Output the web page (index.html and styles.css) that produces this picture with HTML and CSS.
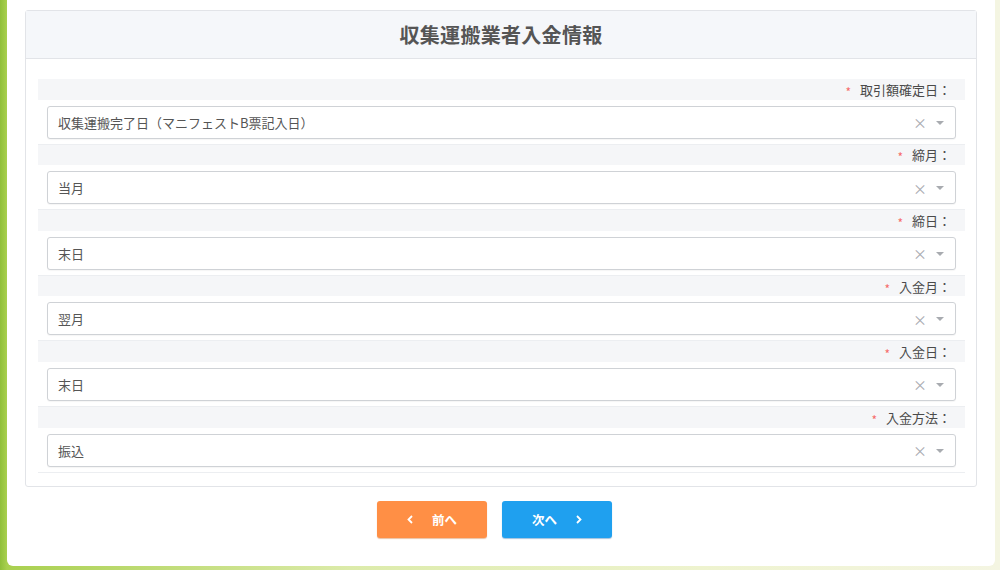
FILE: index.html
```html
<!DOCTYPE html>
<html lang="ja">
<head>
<meta charset="utf-8">
<title>収集運搬業者入金情報</title>
<link rel="stylesheet" href="styles.css">
</head>
<body>
<div class="modal">
  <div class="card">
    <div class="card-header">収集運搬業者入金情報</div>
    <div class="card-body">
      <div class="row">
        <div class="label"><span class="req">*</span>取引額確定日：</div>
        <div class="field"><div class="select"><span class="value">収集運搬完了日（マニフェストB票記入日）</span><span class="icons"><span class="clear">×</span><span class="caret"></span></span></div></div>
      </div>
      <div class="row">
        <div class="label"><span class="req">*</span>締月：</div>
        <div class="field"><div class="select"><span class="value">当月</span><span class="icons"><span class="clear">×</span><span class="caret"></span></span></div></div>
      </div>
      <div class="row">
        <div class="label"><span class="req">*</span>締日：</div>
        <div class="field"><div class="select"><span class="value">末日</span><span class="icons"><span class="clear">×</span><span class="caret"></span></span></div></div>
      </div>
      <div class="row">
        <div class="label"><span class="req">*</span>入金月：</div>
        <div class="field"><div class="select"><span class="value">翌月</span><span class="icons"><span class="clear">×</span><span class="caret"></span></span></div></div>
      </div>
      <div class="row">
        <div class="label"><span class="req">*</span>入金日：</div>
        <div class="field"><div class="select"><span class="value">末日</span><span class="icons"><span class="clear">×</span><span class="caret"></span></span></div></div>
      </div>
      <div class="row">
        <div class="label"><span class="req">*</span>入金方法：</div>
        <div class="field"><div class="select"><span class="value">振込</span><span class="icons"><span class="clear">×</span><span class="caret"></span></span></div></div>
      </div>
    </div>
  </div>
  <div class="actions">
    <button class="btn btn-prev"><svg class="chev" width="6" height="9" viewBox="0 0 6 9"><path d="M5 1 L1.5 4.5 L5 8" fill="none" stroke="#fff" stroke-width="1.8"/></svg><span>前へ</span></button>
    <button class="btn btn-next"><span>次へ</span><svg class="chev" width="6" height="9" viewBox="0 0 6 9"><path d="M1 1 L4.5 4.5 L1 8" fill="none" stroke="#fff" stroke-width="1.8"/></svg></button>
  </div>
</div>
</body>
</html>
```
FILE: styles.css
```css
html, body {
  margin: 0;
  padding: 0;
  height: 570px;
  overflow: hidden;
}
body {
  background: linear-gradient(90deg, #8fbf3a 0px, #a9d04f 7px, #dcebaa 35%, #eef3cf 70%, #f4f5e2 100%);
  font-family: "Noto Sans CJK JP", "Noto Sans", sans-serif;
  color: #555;
}
.modal {
  margin-left: 7px;
  width: 988px;
  height: 566px;
  background: #fff;
  border-radius: 0 0 6px 6px;
  padding-top: 10px;
  box-sizing: border-box;
}
.card {
  margin: 0 18px;
  border: 1px solid #e2e4e8;
  border-radius: 3px;
  height: 477px;
  box-sizing: border-box;
}
.card-header {
  height: 47px;
  background: #f5f7fa;
  border-bottom: 1px solid #e2e4e8;
  display: flex;
  align-items: center;
  justify-content: center;
  font-size: 20px;
  font-weight: bold;
  color: #555;
  letter-spacing: 0.3px;
}
.card-body {
  padding: 20px 11px 0 12px;
}
.row {
  border-bottom: 1px solid #eceef1;
  background: #fafbfc;
}
.label {
  height: 20.6px;
  background: #f5f6f8;
  display: flex;
  align-items: center;
  justify-content: flex-end;
  padding-right: 14px;
  font-size: 13px;
  color: #4a4a4a;
}
.req {
  color: #f56c6c;
  margin-right: 9px;
  font-size: 12px;
  position: relative;
  top: 2px;
}
.field {
  padding: 6px 9px 5px 9px;
  background: #fff;
}
.select {
  height: 33px;
  border: 1px solid #cfd2d6;
  border-radius: 3px;
  box-sizing: border-box;
  display: flex;
  align-items: center;
  justify-content: space-between;
  padding: 0 11px 0 10px;
  background: #fff;
  box-shadow: 0 1px 1px rgba(0,0,0,0.04);
}
.value {
  font-size: 13px;
  color: #555;
}
.icons {
  display: flex;
  align-items: center;
  gap: 9px;
}
.clear {
  font-size: 14px;
  color: #a8abb0;
  line-height: 1;
}
.caret {
  width: 0;
  height: 0;
  border-left: 4px solid transparent;
  border-right: 4px solid transparent;
  border-top: 4px solid #a8abb0;
  margin-top: 1px;
}
.actions {
  display: flex;
  justify-content: center;
  gap: 15px;
  margin-top: 14px;
  padding-right: 13px;
}
.btn {
  width: 110px;
  height: 37px;
  border: none;
  border-radius: 3px;
  color: #fff;
  font-family: "Noto Sans CJK JP", "Noto Sans", sans-serif;
  font-size: 12.5px;
  font-weight: bold;
  display: flex;
  align-items: center;
  justify-content: center;
  gap: 19px;
  padding: 0;
}
.btn-prev {
  background: #ff8f45;
  box-shadow: 0 1px 1px rgba(200,100,30,0.4);
}
.btn-next {
  background: #1fa0ef;
  box-shadow: 0 1px 1px rgba(20,100,170,0.4);
}
.chev {
  display: block;
}
```
